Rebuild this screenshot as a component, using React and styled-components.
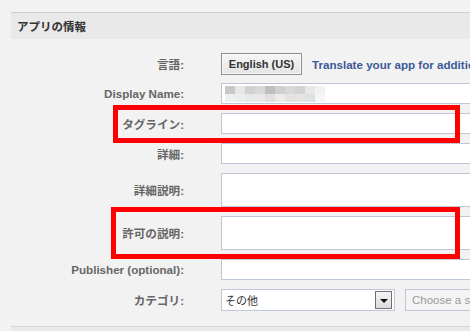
import styled, { createGlobalStyle } from "styled-components";

const GlobalStyle = createGlobalStyle`
  body {
    margin: 0;
    background: #f2f2f2;
    font-family: "Liberation Sans", "Noto Sans CJK JP", sans-serif;
    overflow: hidden;
  }
`;

const Panel = styled.div`
  margin: 12px 0 0 11px;
`;

const Header = styled.div`
  height: 26px;
  border-top: 1px solid #cccccc;
  background: #e9e9e9;
  display: flex;
  align-items: center;
  padding-left: 6px;
  font-size: 11.5px;
  font-weight: bold;
  color: #333;
`;

const Form = styled.div`
  display: flex;
  flex-direction: column;
  gap: 9px;
  padding-top: 14px;
`;

const Row = styled.div`
  position: relative;
  display: flex;
  align-items: center;
  margin-bottom: ${(p) => p.$after || 0}px;
`;

const Label = styled.div`
  width: 173px;
  flex: none;
  text-align: right;
  font-size: 11.6px;
  font-weight: bold;
  color: #666;
  white-space: nowrap;
`;

const Field = styled.div`
  margin-left: 37px;
  flex: 1;
  min-width: 0;
  display: flex;
  align-items: center;
  gap: 10px;
  white-space: nowrap;
  overflow: hidden;
`;

const Input = styled.div`
  box-sizing: border-box;
  height: ${(p) => (p.$tall ? 34 : 21)}px;
  width: 260px;
  flex: none;
  background: #fff;
  border: 1px solid #bdc7d8;
  display: flex;
  align-items: center;
  padding-left: 3px;
`;

const LangButton = styled.div`
  box-sizing: border-box;
  width: 81px;
  height: 22px;
  flex: none;
  border: 1px solid #8f8f8f;
  box-shadow: inset 0 0 0 1px #fafafa;
  background: linear-gradient(#f6f6f6, #e4e4e4);
  display: flex;
  align-items: center;
  justify-content: center;
  font-size: 11px;
  font-weight: bold;
  color: #333;
`;

const Link = styled.span`
  font-size: 11.6px;
  font-weight: bold;
  color: #3b5998;
`;

const Mosaic = styled.div`
  display: grid;
  grid-template-columns: repeat(10, 10px);
  grid-auto-rows: 8px;
`;

const Tile = styled.div`
  background: ${(p) => p.$c};
`;

const Select = styled.div`
  box-sizing: border-box;
  width: 174px;
  height: 22px;
  flex: none;
  background: #fff;
  border: 1px solid #bdc7d8;
  display: flex;
  align-items: center;
  justify-content: space-between;
  padding: 0 2px 0 3px;
  font-size: 11px;
  color: #333;
`;

const Arrow = styled.div`
  box-sizing: border-box;
  width: 17px;
  height: 18px;
  border: 1px solid #707070;
  background: linear-gradient(#f4f4f4, #dcdcdc);
  display: flex;
  align-items: center;
  justify-content: center;
  &::after {
    content: "";
    border-left: 4px solid transparent;
    border-right: 4px solid transparent;
    border-top: 4px solid #111;
    margin-top: 2px;
  }
`;

const SubSelect = styled.div`
  box-sizing: border-box;
  width: 120px;
  height: 22px;
  flex: none;
  background: #f4f4f4;
  border: 1px solid #bdc7d8;
  display: flex;
  align-items: center;
  padding-left: 6px;
  font-size: 11.5px;
  color: #999;
`;

const Highlight = styled.div`
  position: absolute;
  left: ${(p) => p.$left}px;
  top: ${(p) => p.$top}px;
  width: ${(p) => p.$w}px;
  height: ${(p) => p.$h}px;
  box-sizing: border-box;
  border: 5px solid #ff0000;
  pointer-events: none;
`;

const Footer = styled.div`
  margin-top: 15px;
  height: 10px;
  border-top: 1px solid #d6d6d6;
  background: #e9e9e9;
`;

const tiles = [
  "#c8c8c8", "#e6e8e6", "#d2d2d2", "#d8d8d8", "#c0bec0", "#d0d0d0", "#d8d8d8", "#d2d2d2", "#e8e8e8", "#f2f2f2",
  "#f0f0f0", "#eceeec", "#e8e8e8", "#e8e8e8", "#e0e0e0", "#ecebe8", "#e2e2e2", "#e6e3e0", "#dde0e4", "#f6f6f6",
];

export default function App() {
  return (
    <>
      <GlobalStyle />
      <Panel>
        <Header>アプリの情報</Header>
        <Form>
          <Row $after={-1}>
            <Label>言語:</Label>
            <Field>
              <LangButton>English (US)</LangButton>
              <Link>Translate your app for additional languages</Link>
            </Field>
          </Row>
          <Row>
            <Label>Display Name:</Label>
            <Field>
              <Input style={{ width: 300 }}>
                <Mosaic>
                  {tiles.map((c, i) => (
                    <Tile key={i} $c={c} />
                  ))}
                </Mosaic>
              </Input>
            </Field>
          </Row>
          <Row>
            <Label>タグライン:</Label>
            <Field>
              <Input />
            </Field>
            <Highlight $left={102} $top={-8} $w={347} $h={38} />
          </Row>
          <Row>
            <Label>詳細:</Label>
            <Field>
              <Input />
            </Field>
          </Row>
          <Row>
            <Label>詳細説明:</Label>
            <Field>
              <Input $tall />
            </Field>
          </Row>
          <Row>
            <Label>許可の説明:</Label>
            <Field>
              <Input $tall />
            </Field>
            <Highlight $left={100} $top={-9} $w={349} $h={52} />
          </Row>
          <Row>
            <Label>Publisher (optional):</Label>
            <Field>
              <Input />
            </Field>
          </Row>
          <Row>
            <Label>カテゴリ:</Label>
            <Field>
              <Select>
                <span>その他</span>
                <Arrow />
              </Select>
              <SubSelect>Choose a subcategory</SubSelect>
            </Field>
          </Row>
        </Form>
        <Footer />
      </Panel>
    </>
  );
}
